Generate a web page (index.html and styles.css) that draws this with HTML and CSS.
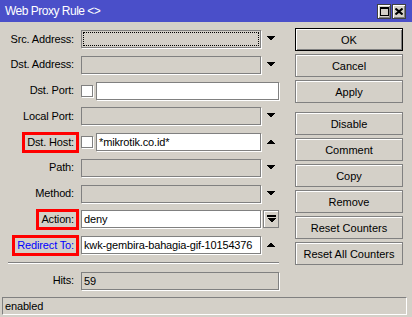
FILE: index.html
```html
<!DOCTYPE html>
<html lang="en">
<head>
    <meta charset="UTF-8">
    <title>Web Proxy Rule</title>
    <link rel="stylesheet" href="styles.css">
</head>
<body>
    <div class="window">
        <div class="titlebar">
            <span class="title">Web Proxy Rule &lt;&gt;</span>
            <div class="title-buttons">
                <button class="title-btn">
                    <svg width="9" height="9" shape-rendering="crispEdges"><rect x="0" y="0" width="9" height="2" fill="#000"/><rect x="0.5" y="0.5" width="8" height="8" fill="none" stroke="#000"/></svg>
                </button>
                <button class="title-btn">
                    <svg width="8" height="7"><path d="M0.5 0.5L7.5 6.5M7.5 0.5L0.5 6.5" stroke="#000" stroke-width="2"/></svg>
                </button>
            </div>
        </div>

        <div class="content">
            <div class="form">
                <div class="row">
                    <div class="label"><span>Src. Address:</span></div>
                    <div class="control">
                        <div class="field focused"></div>
                        <div class="arrow"><svg width="9" height="5" shape-rendering="crispEdges"><polygon points="0,0 9,0 4.5,4.5" fill="#000"/></svg></div>
                    </div>
                </div>
                <div class="row">
                    <div class="label"><span>Dst. Address:</span></div>
                    <div class="control">
                        <div class="field"></div>
                        <div class="arrow"><svg width="9" height="5" shape-rendering="crispEdges"><polygon points="0,0 9,0 4.5,4.5" fill="#000"/></svg></div>
                    </div>
                </div>
                <div class="row">
                    <div class="label"><span>Dst. Port:</span></div>
                    <div class="control">
                        <div class="checkbox"></div>
                        <div class="field white port"></div>
                    </div>
                </div>
                <div class="row">
                    <div class="label"><span>Local Port:</span></div>
                    <div class="control">
                        <div class="field"></div>
                        <div class="arrow"><svg width="9" height="5" shape-rendering="crispEdges"><polygon points="0,0 9,0 4.5,4.5" fill="#000"/></svg></div>
                    </div>
                </div>
                <div class="row">
                    <div class="label"><span class="marked">Dst. Host:</span></div>
                    <div class="control">
                        <div class="checkbox"></div>
                        <div class="field white host">*mikrotik.co.id*</div>
                        <div class="arrow"><svg width="9" height="5" shape-rendering="crispEdges"><polygon points="4.5,0.5 9,5 0,5" fill="#000"/></svg></div>
                    </div>
                </div>
                <div class="row">
                    <div class="label"><span>Path:</span></div>
                    <div class="control">
                        <div class="field"></div>
                        <div class="arrow"><svg width="9" height="5" shape-rendering="crispEdges"><polygon points="0,0 9,0 4.5,4.5" fill="#000"/></svg></div>
                    </div>
                </div>
                <div class="row">
                    <div class="label"><span>Method:</span></div>
                    <div class="control">
                        <div class="field"></div>
                        <div class="arrow"><svg width="9" height="5" shape-rendering="crispEdges"><polygon points="0,0 9,0 4.5,4.5" fill="#000"/></svg></div>
                    </div>
                </div>
                <div class="row">
                    <div class="label"><span class="marked">Action:</span></div>
                    <div class="control">
                        <div class="field white">deny</div>
                        <button class="drop-btn"><svg width="9" height="8" shape-rendering="crispEdges"><rect x="0" y="0" width="9" height="2" fill="#000"/><polygon points="0,3 9,3 4.5,7.5" fill="#000"/></svg></button>
                    </div>
                </div>
                <div class="row">
                    <div class="label"><span class="marked link">Redirect To:</span></div>
                    <div class="control">
                        <div class="field white">kwk-gembira-bahagia-gif-10154376</div>
                        <div class="arrow"><svg width="9" height="5" shape-rendering="crispEdges"><polygon points="4.5,0.5 9,5 0,5" fill="#000"/></svg></div>
                    </div>
                </div>

                <div class="separator"></div>

                <div class="row">
                    <div class="label"><span>Hits:</span></div>
                    <div class="control">
                        <div class="field wide">59</div>
                    </div>
                </div>
            </div>

            <div class="actions">
                <button class="btn default">OK</button>
                <button class="btn">Cancel</button>
                <button class="btn">Apply</button>
                <button class="btn spaced">Disable</button>
                <button class="btn">Comment</button>
                <button class="btn">Copy</button>
                <button class="btn">Remove</button>
                <button class="btn">Reset Counters</button>
                <button class="btn">Reset All Counters</button>
            </div>
        </div>

        <div class="statusbar">enabled</div>
    </div>
</body>
</html>
```

FILE: styles.css
```css
:root {
    --face: #d4d0c8;
    --shadow: #808080;
    --dark: #404040;
    --highlight: #ffffff;
    --title-blue: #4a4fc9;
}

* {
    box-sizing: border-box;
}

body {
    margin: 0;
    background-color: var(--face);
    font-family: 'Liberation Sans', Arial, sans-serif;
    font-size: 11px;
    letter-spacing: -0.15px;
    color: #000;
}

.window {
    width: 412px;
    height: 317px;
    display: flex;
    flex-direction: column;
}

/* title bar */
.titlebar {
    height: 22px;
    background-color: var(--title-blue);
    color: white;
    display: flex;
    align-items: center;
    justify-content: space-between;
    padding: 0 6px 0 5px;
}

.title {
    font-size: 12px;
    letter-spacing: -0.5px;
}

.title-buttons {
    display: flex;
    gap: 1px;
}

.title-btn {
    width: 14px;
    height: 15px;
    padding: 0;
    background-color: var(--face);
    border: 1px solid var(--dark);
    box-shadow: inset 1px 1px 0 var(--highlight), inset -1px -1px 0 var(--shadow);
    display: flex;
    align-items: center;
    justify-content: center;
}

/* main area */
.content {
    display: flex;
    gap: 16px;
    padding-top: 6px;
}

.form {
    width: 279px;
    margin-top: 2px;
    display: flex;
    flex-direction: column;
    gap: 7.75px;
}

.row {
    display: grid;
    grid-template-columns: 79px 198px;
    column-gap: 2px;
    height: 18px;
}

.label {
    height: 18px;
    display: flex;
    align-items: center;
    justify-content: flex-end;
}

.label span {
    border: 3px solid transparent;
    padding: 1px 2px;
    line-height: 13px;
    white-space: nowrap;
}

.label span.marked {
    border-color: #ff0000;
}

.label span.link {
    color: #0000ff;
}

.control {
    height: 18px;
    display: flex;
    align-items: center;
}

.field {
    position: relative;
    width: 180px;
    height: 18px;
    border: 1px solid var(--shadow);
    box-shadow: 1px 1px 0 var(--highlight);
    background-color: var(--face);
    padding: 0 2px;
    line-height: 16px;
    white-space: nowrap;
    overflow: hidden;
}

.field.white {
    background-color: white;
}

.field.port {
    width: 183px;
}

.field.host {
    width: 165px;
}

.field.wide {
    width: 198px;
}

.field.focused::after {
    content: '';
    position: absolute;
    inset: 1px;
    border: 1px dotted #000;
}

.checkbox {
    width: 12px;
    height: 12px;
    border: 1px solid var(--shadow);
    box-shadow: 1px 1px 0 var(--highlight);
    background-color: white;
    margin-right: 3px;
}

.arrow {
    width: 18px;
    height: 18px;
    display: flex;
    align-items: center;
    justify-content: center;
    padding-bottom: 1px;
}

.drop-btn {
    width: 16px;
    height: 18px;
    margin-left: 2px;
    padding: 0;
    background-color: var(--face);
    border: 1px solid var(--shadow);
    box-shadow: inset 1px 1px 0 var(--highlight);
    display: flex;
    align-items: center;
    justify-content: center;
}

.separator {
    height: 2px;
    margin-left: 8px;
    border-top: 1px solid var(--shadow);
    border-bottom: 1px solid var(--highlight);
}

/* buttons on the right */
.actions {
    display: flex;
    flex-direction: column;
    gap: 3px;
}

.btn {
    width: 108px;
    height: 23px;
    padding: 0;
    font: inherit;
    color: #000;
    background-color: var(--face);
    border: 1px solid var(--shadow);
    box-shadow: inset 1px 1px 0 var(--highlight);
}

.btn.default {
    border-color: #000;
    box-shadow: inset 1px 1px 0 var(--highlight), inset -1px -1px 0 var(--shadow);
}

.btn.spaced {
    margin-top: 6px;
}

/* status bar */
.statusbar {
    margin: auto 5px 2px 2px;
    height: 18px;
    border: 1px solid var(--highlight);
    border-top-color: var(--shadow);
    border-left-color: var(--shadow);
    padding-left: 2px;
    line-height: 16px;
}
```
